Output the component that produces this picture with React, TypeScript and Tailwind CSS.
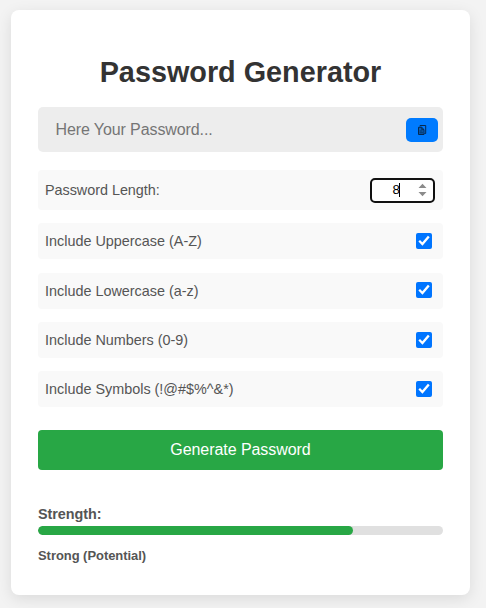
import { useState } from 'react';

const options = [
  { label: 'Include Uppercase (A-Z)', space: 'mt-[13px]', nudge: '' },
  { label: 'Include Lowercase (a-z)', space: 'mt-[14px]', nudge: 'mb-[2px]' },
  { label: 'Include Numbers (0-9)', space: 'mt-[13px]', nudge: '' },
  { label: 'Include Symbols (!@#$%^&*)', space: 'mt-[13px]', nudge: '' },
];

function CopyIcon() {
  return (
    <svg width="10" height="10" viewBox="0 0 10 10" fill="none" stroke="#06294f" strokeWidth="1">
      <path d="M3 1.5V.5h5.7v8H7.5" />
      <path d="M1.5 2.3h3.2L7 4.6v4.9H1.5z" fill="#0b5fb8" />
      <path d="M4.7 2.3v2.3H7M2.5 6h3M2.5 7.8h3.5" strokeWidth=".8" />
    </svg>
  );
}

function CheckBox({ nudge }: { nudge: string }) {
  const [checked, setChecked] = useState(true);
  return (
    <button
      type="button"
      role="checkbox"
      aria-checked={checked}
      onClick={() => setChecked(!checked)}
      className={`${nudge} mr-[11px] flex size-4 items-center justify-center rounded-[2px] bg-[#0075ff]`}
    >
      {checked && (
        <svg width="16" height="16" viewBox="0 0 16 16" fill="none" stroke="white" strokeWidth="2.3">
          <path d="M3.2 7.8 6.4 11 12.8 3.4" />
        </svg>
      )}
    </button>
  );
}

export default function App() {
  return (
    <main className="h-[608px] w-[486px] overflow-hidden bg-[#f3f3f3] pt-[10px] pl-[11px] font-['Liberation_Sans',Arial,sans-serif] text-[#555]">
      <section className="flex h-[585px] w-[459px] flex-col rounded-[8px] bg-white px-[27px] pt-[44px] shadow-[0_4px_15px_rgba(0,0,0,0.1)]">
        <h1 className="h-[53px] text-center text-[28.8px] leading-9 font-bold text-[#333]">Password Generator</h1>

        <div className="flex h-[45px] shrink-0 items-center rounded-[5px] bg-[#ededed] pr-[5px] pl-[17.5px]">
          <span className="flex-1 text-base tracking-[-0.1px] text-[#757575]">Here Your Password...</span>
          <button type="button" aria-label="Copy" className="flex h-6 w-8 items-center justify-center rounded-[5px] bg-[#007bff]">
            <CopyIcon />
          </button>
        </div>

        <div className="mt-[18px] flex h-10 shrink-0 items-center justify-between rounded-[4px] bg-[#f9f9f9] pr-2 pl-[7px] text-[14.4px]">
          <span className="pt-[2px] tracking-[-0.03px]">Password Length:</span>
          <div className="flex h-[25px] w-[65px] items-center rounded-[5px] border-2 border-[#101010] bg-white pl-[20.5px] text-black">
            <span className="text-[13.33px] leading-4">8</span>
            <span className="-ml-px h-[14px] w-px bg-black" />
            <svg className="ml-[18px]" width="9" height="14" viewBox="0 0 9 14" fill="#8b8b8b">
              <path d="M.5 5 4.5 .8l4 4.2zM.5 9l4 4.2 4-4.2z" />
            </svg>
          </div>
        </div>

        {options.map(({ label, space, nudge }) => (
          <div key={label} className={`${space} flex h-9 shrink-0 items-center justify-between rounded-[4px] bg-[#f9f9f9] pl-[7px] text-[14.4px]`}>
            <span className="pt-[2px]">{label}</span>
            <CheckBox nudge={nudge} />
          </div>
        ))}

        <button type="button" className="mt-[23px] h-10 shrink-0 rounded-[4px] bg-[#28a745] text-base tracking-[-0.06px] text-white">
          Generate Password
        </button>

        <div className="mt-[36px] text-[14.4px] leading-[17px] font-bold tracking-[-0.05px]">Strength:</div>
        <div className="mt-[3px] h-[9px] shrink-0 overflow-hidden rounded-[5px] bg-[#e0e0e0]">
          <div className="h-full w-[315px] rounded-[5px] bg-[#28a745]" />
        </div>
        <div className="mt-[13px] text-[12.96px] leading-[15px] font-bold tracking-[-0.03px]">Strong (Potential)</div>
      </section>
    </main>
  );
}
